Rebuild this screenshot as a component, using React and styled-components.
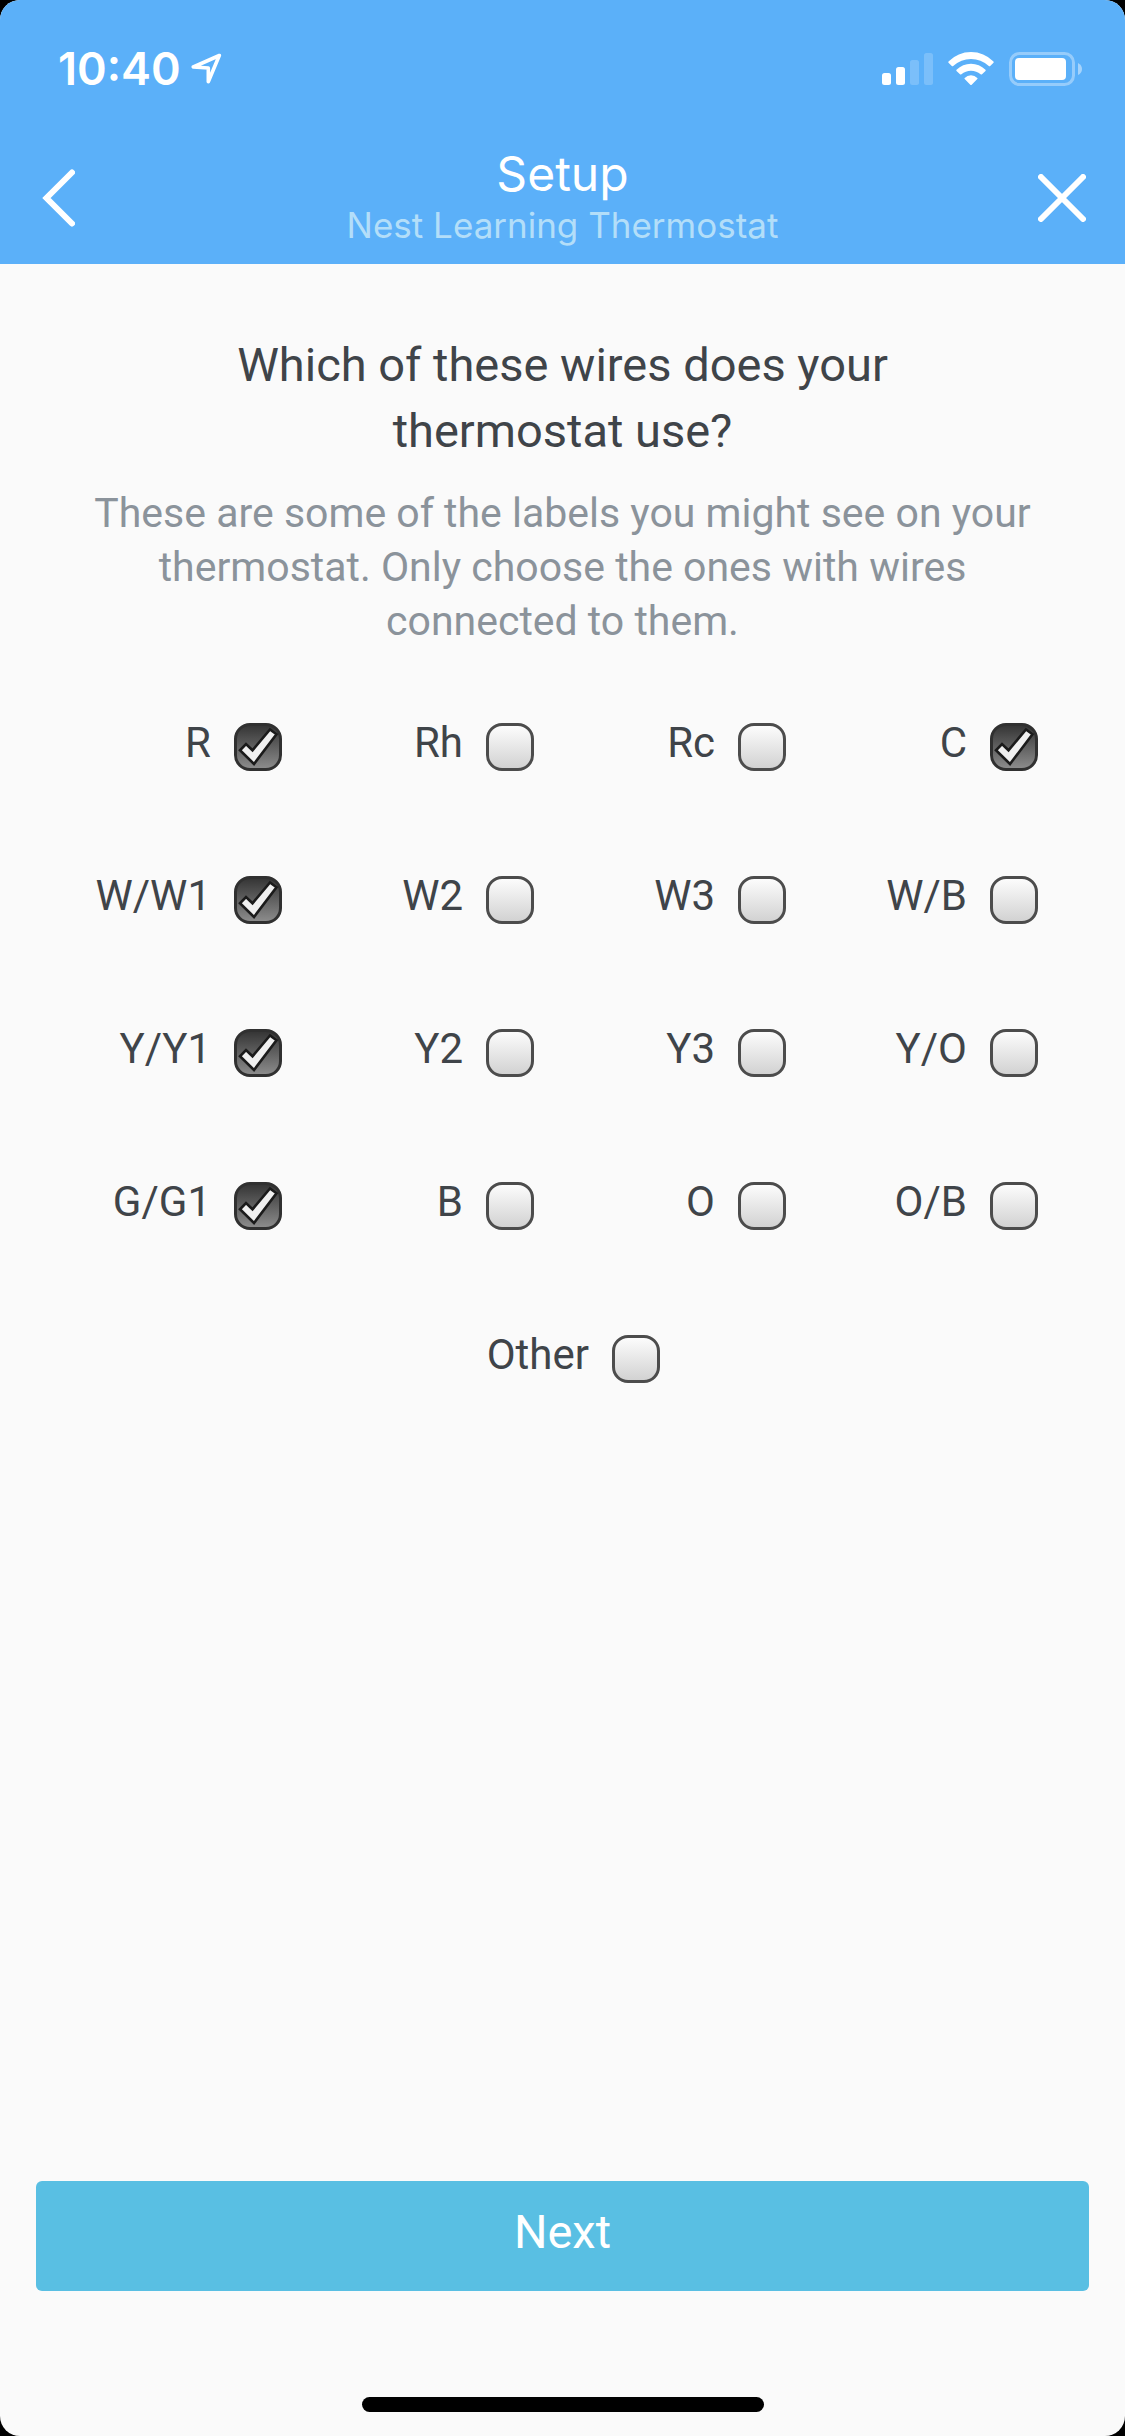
import React from 'react';
import { useState } from 'react';
import styled, { createGlobalStyle } from 'styled-components';

const GlobalStyle = createGlobalStyle`
  * {
    box-sizing: border-box;
  }

  body {
    margin: 0;
    background-color: #000;
    font-family: Roboto, 'Liberation Sans', sans-serif;
  }
`;

const Screen = styled.div`
  display: flex;
  flex-direction: column;
  min-height: 100vh;
  border-radius: 20px;
  overflow: hidden;
  background-color: #fafafa;
  color: #3f4449;
`;

const Header = styled.header`
  background-color: #5bb0f9;
  color: #fff;
  font-family: Inter, 'Liberation Sans', sans-serif;
`;

const StatusBar = styled.div`
  display: flex;
  align-items: center;
  justify-content: space-between;
  height: 138px;
  padding: 0 42px 0 58px;
`;

const StatusGroup = styled.div`
  display: flex;
  align-items: center;
  gap: ${({ $gap }) => $gap}px;
`;

const Time = styled.span`
  font-size: 45px;
  line-height: 48px;
  font-weight: 600;
`;

const NavBar = styled.div`
  display: grid;
  grid-template-columns: 126px 1fr 126px;
  align-items: center;
  height: 126px;
  padding-bottom: 6px;
`;

const NavButton = styled.button`
  display: flex;
  padding: 12px 39px;
  border: 0;
  background: none;
  color: inherit;
  cursor: pointer;
`;

const Titles = styled.div`
  margin-bottom: 6px;
  text-align: center;
`;

const Title = styled.h1`
  margin: 0;
  font-size: 48px;
  line-height: 60px;
  font-weight: 400;
`;

const Device = styled.p`
  margin: 0;
  font-size: 35px;
  line-height: 42px;
  color: #b3def9;
`;

const Main = styled.main`
  flex: 1;
  padding: 68px 30px 0;
  text-align: center;
`;

const Question = styled.h2`
  max-width: 720px;
  margin: 0 auto 22px;
  font-size: 47px;
  line-height: 66px;
  font-weight: 400;
`;

const Hint = styled.p`
  max-width: 960px;
  margin: 0 auto 71px;
  font-size: 41px;
  line-height: 54px;
  color: #8b939b;
`;

const Wires = styled.div`
  display: flex;
  flex-wrap: wrap;
  justify-content: center;
  row-gap: 99px;
  margin-right: 57px;
`;

const Wire = styled.label`
  display: flex;
  justify-content: flex-end;
  gap: 23px;
  width: 25%;
  height: 54px;
  font-size: 42px;
  line-height: 48px;
  cursor: pointer;
`;

const Box = styled.span`
  display: grid;
  width: 48px;
  height: 48px;
  margin-top: 4px;

  > * {
    grid-area: 1 / 1;
  }
`;

const Check = styled.input`
  appearance: none;
  width: 48px;
  height: 48px;
  margin: 0;
  border: 3px solid #4c4c4c;
  border-radius: 16px;
  background: linear-gradient(#fff, #cfcfcf) border-box;

  &:checked {
    border-color: #303030;
    background: linear-gradient(#303030, #919191) border-box;
  }
`;

const Tick = styled.svg`
  pointer-events: none;
`;

const Footer = styled.footer`
  display: flex;
  flex-direction: column;
  align-items: center;
  padding: 0 36px 24px;
`;

const NextButton = styled.button`
  width: 100%;
  height: 110px;
  margin-bottom: 106px;
  padding: 0 0 8px;
  border: 0;
  border-radius: 6px;
  background-color: #59bfe3;
  color: #fff;
  font-family: inherit;
  font-size: 47px;
  line-height: 60px;
  cursor: pointer;
`;

const HomeBar = styled.div`
  width: 402px;
  height: 15px;
  border-radius: 8px;
  background-color: #000;
`;

const wires = [
  'R', 'Rh', 'Rc', 'C',
  'W/W1', 'W2', 'W3', 'W/B',
  'Y/Y1', 'Y2', 'Y3', 'Y/O',
  'G/G1', 'B', 'O', 'O/B',
  'Other',
];

const LocationIcon = () => (
  <svg width="31" height="32" viewBox="0 0 31 32" fill="none" stroke="#fff" strokeWidth="3.600" strokeLinejoin="round">
    <path d="M28.300 2.500 L2.300 14 L17.300 15 L17.300 28.700 Z" />
  </svg>
);

const SignalIcon = () => (
  <svg width="51" height="34" viewBox="0 0 51 34" fill="#fff">
    <rect x="0" y="21" width="9" height="12" rx="2.500" />
    <rect x="14" y="15" width="9" height="18" rx="2.500" />
    <rect x="28" y="8" width="9" height="25" rx="2.500" opacity="0.2" />
    <rect x="42" y="1" width="9" height="32" rx="2.500" opacity="0.2" />
  </svg>
);

const WifiIcon = () => (
  <svg width="46" height="34" viewBox="0 0 46 34" fill="#fff">
    <path d="M0.500 9.500 Q10 0 23 0 Q36 0 45.500 9.500 Q46 10.200 45.500 10.800 L42.200 14 Q41.500 14.600 40.800 14 Q33 7 23 7 Q13 7 5.200 14 Q4.500 14.600 3.800 14 L0.500 10.800 Q0 10.200 0.500 9.500 Z" />
    <path d="M8.500 17.700 Q14.700 11.700 23 11.700 Q31.300 11.700 37.500 17.700 Q38 18.300 37.500 18.900 L34 22.300 Q33.300 22.900 32.600 22.300 Q28.500 18.700 23 18.700 Q17.500 18.700 13.400 22.300 Q12.700 22.900 12 22.300 L8.500 18.900 Q8 18.300 8.500 17.700 Z" />
    <path d="M16.700 25.900 Q19.300 23.300 23 23.300 Q26.700 23.300 29.300 25.900 Q29.900 26.500 29.300 27.100 L23.700 32.700 Q23 33.300 22.300 32.700 L16.700 27.100 Q16.100 26.500 16.700 25.900 Z" />
  </svg>
);

const BatteryIcon = () => (
  <svg width="74" height="34" viewBox="0 0 74 34">
    <rect x="1.500" y="1.500" width="63" height="31" rx="9" fill="none" stroke="#fff" strokeWidth="3" opacity="0.36" />
    <rect x="6" y="6" width="51" height="22" rx="4" fill="#fff" />
    <path d="M69 11 Q73 13 73 17 Q73 21 69 23 Z" fill="#fff" opacity="0.45" />
  </svg>
);

const BackIcon = () => (
  <svg width="36" height="60" viewBox="0 0 36 60" fill="none" stroke="#fff" strokeWidth="6" strokeLinecap="round">
    <path d="M33 4.500 L7.500 30 L33 55.500" />
  </svg>
);

const CloseIcon = () => (
  <svg width="48" height="48" viewBox="0 0 48 48" fill="none" stroke="#fff" strokeWidth="6" strokeLinecap="round">
    <path d="M3 3 L45 45 M45 3 L3 45" />
  </svg>
);

const WireOption = ({ name, checked, onToggle }) => (
  <Wire>
    {name}
    <Box>
      <Check type="checkbox" name={name} checked={checked} onChange={() => onToggle(name)} />
      {checked && (
        <Tick width="48" height="48" viewBox="0 0 48 48" fill="#f0f0f0" stroke="#1b1b1b" strokeWidth="2.600">
          <path d="M36 6.500 L42.500 11.300 L20 41 L6 27.300 L12 21 L18.500 27.300 Z" />
        </Tick>
      )}
    </Box>
  </Wire>
);

const App = () => {
  const [selected, setSelected] = useState(['R', 'C', 'W/W1', 'Y/Y1', 'G/G1']);

  function toggleWire(name) {
    if (selected.includes(name)) {
      setSelected(selected.filter((wire) => wire !== name));
    } else {
      setSelected([...selected, name]);
    }
  }

  return (
    <>
      <GlobalStyle />
      <Screen>
        <Header>
          <StatusBar>
            <StatusGroup $gap={10}>
              <Time>10:40</Time>
              <LocationIcon />
            </StatusGroup>
            <StatusGroup $gap={15}>
              <SignalIcon />
              <WifiIcon />
              <BatteryIcon />
            </StatusGroup>
          </StatusBar>
          <NavBar>
            <NavButton aria-label="Back"><BackIcon /></NavButton>
            <Titles>
              <Title>Setup</Title>
              <Device>Nest Learning Thermostat</Device>
            </Titles>
            <NavButton aria-label="Close"><CloseIcon /></NavButton>
          </NavBar>
        </Header>
        <Main>
          <Question>Which of these wires does your thermostat use?</Question>
          <Hint>
            These are some of the labels you might see on your thermostat.
            Only choose the ones with wires connected to them.
          </Hint>
          <Wires>
            {wires.map((name) => (
              <WireOption
                key={name}
                name={name}
                checked={selected.includes(name)}
                onToggle={toggleWire}
              />
            ))}
          </Wires>
        </Main>
        <Footer>
          <NextButton>Next</NextButton>
          <HomeBar />
        </Footer>
      </Screen>
    </>
  );
};

export default App;
